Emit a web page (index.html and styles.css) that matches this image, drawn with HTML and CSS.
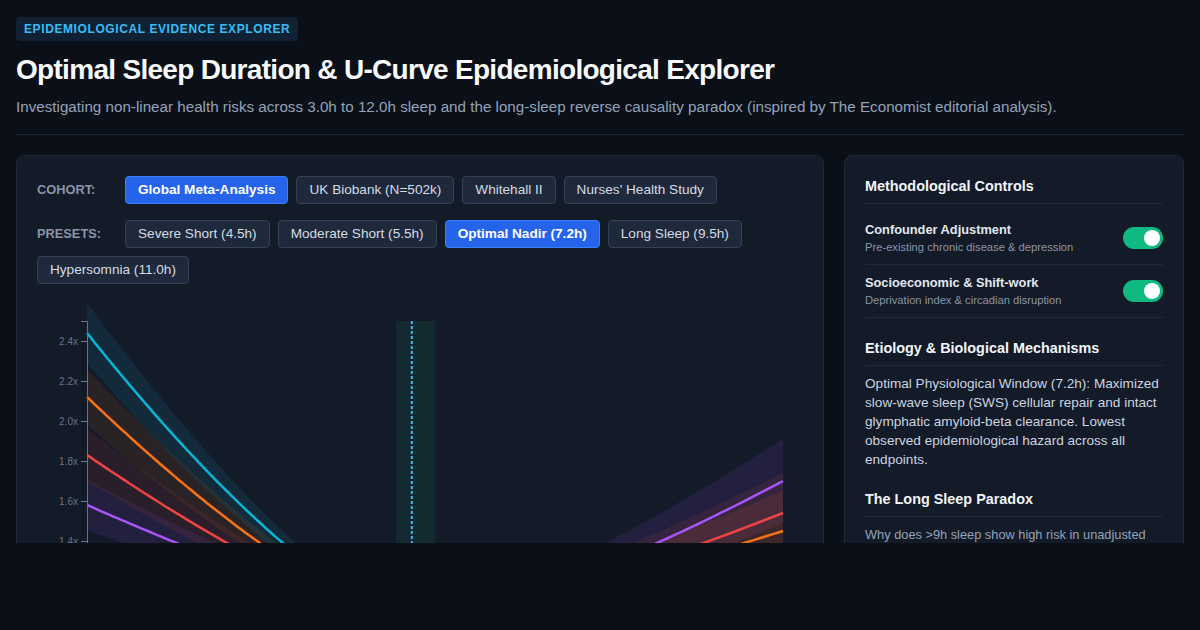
FILE: index.html
```html
<!DOCTYPE html>
<html lang="en">
<head>
<meta charset="utf-8">
<title>Optimal Sleep Duration &amp; U-Curve Epidemiological Explorer</title>
<link rel="stylesheet" href="styles.css">
</head>
<body>
<div class="page">
  <header class="header">
    <span class="badge">Epidemiological Evidence Explorer</span>
    <h1 class="title">Optimal Sleep Duration &amp; U-Curve Epidemiological Explorer</h1>
    <p class="subtitle">Investigating non-linear health risks across 3.0h to 12.0h sleep and the long-sleep reverse causality paradox (inspired by The Economist editorial analysis).</p>
  </header>

  <main class="layout">
    <section class="card chart-card">
      <div class="control-row cohort-row">
        <span class="control-label">COHORT:</span>
        <button class="btn active">Global Meta-Analysis</button>
        <button class="btn">UK Biobank (N=502k)</button>
        <button class="btn">Whitehall II</button>
        <button class="btn">Nurses' Health Study</button>
      </div>
      <div class="control-row">
        <span class="control-label">PRESETS:</span>
        <button class="btn">Severe Short (4.5h)</button>
        <button class="btn">Moderate Short (5.5h)</button>
        <button class="btn active">Optimal Nadir (7.2h)</button>
        <button class="btn">Long Sleep (9.5h)</button>
        <button class="btn">Hypersomnia (11.0h)</button>
      </div>
      <svg id="chart" class="chart" width="766" height="260" viewBox="0 0 766 260" xmlns="http://www.w3.org/2000/svg">
        <g id="zone"></g>
        <g id="bands"></g>
        <g id="lines"></g>
        <g id="axis" class="axis"></g>
      </svg>
    </section>

    <aside class="card side">
      <section class="side-section">
        <h3 class="side-title">Methodological Controls</h3>
        <div class="toggle-row">
          <div class="toggle-text">
            <div class="toggle-name">Confounder Adjustment</div>
            <div class="toggle-desc">Pre-existing chronic disease &amp; depression</div>
          </div>
          <span class="switch on"><span class="knob"></span></span>
        </div>
        <div class="toggle-row">
          <div class="toggle-text">
            <div class="toggle-name">Socioeconomic &amp; Shift-work</div>
            <div class="toggle-desc">Deprivation index &amp; circadian disruption</div>
          </div>
          <span class="switch on"><span class="knob"></span></span>
        </div>
      </section>

      <section class="side-section">
        <h3 class="side-title">Etiology &amp; Biological Mechanisms</h3>
        <p class="side-text">Optimal Physiological Window (7.2h): Maximized slow-wave sleep (SWS) cellular repair and intact glymphatic amyloid-beta clearance. Lowest observed epidemiological hazard across all endpoints.</p>
      </section>

      <section class="side-section">
        <h3 class="side-title">The Long Sleep Paradox</h3>
        <p class="side-note">Why does &gt;9h sleep show high risk in unadjusted</p>
      </section>
    </aside>
  </main>
</div>
<script src="script.js"></script>
</body>
</html>
```

FILE: styles.css
```css
* { box-sizing: border-box; }

html, body {
  margin: 0;
  padding: 0;
  background: #0b0f18;
}

body {
  font-family: "Liberation Sans", Arial, Helvetica, sans-serif;
  color: #e2e8f0;
}

.page {
  height: 543px;
  overflow: hidden;
  padding: 17px 16px 0;
}

.header {
  padding-bottom: 16px;
  border-bottom: 1px solid #1e293b;
}

.badge {
  display: inline-block;
  padding: 4px 8px;
  font-size: 12px;
  line-height: 16px;
  font-weight: 700;
  letter-spacing: 0.6px;
  text-transform: uppercase;
  color: #38bdf8;
  background: #0f2132;
  border-radius: 4px;
}

.title {
  margin: 12px 0 0;
  font-size: 28px;
  line-height: 1.2;
  font-weight: 700;
  letter-spacing: -0.7px;
  color: #f8fafc;
}

.subtitle {
  margin: 9px 0 0;
  font-size: 15.2px;
  line-height: 22px;
  color: #94a3b8;
}

.layout {
  display: grid;
  grid-template-columns: 1fr 340px;
  gap: 20px;
  margin-top: 20px;
  align-items: start;
}

.card {
  background: #131a28;
  border: 1px solid #1f2937;
  border-radius: 8px;
  padding: 20px;
}

.control-row {
  display: flex;
  flex-wrap: wrap;
  align-items: center;
  gap: 8px;
}

.cohort-row {
  margin-bottom: 16px;
}

.control-label {
  min-width: 80px;
  font-size: 12.8px;
  font-weight: 700;
  color: #8b95a7;
}

.btn {
  font-family: inherit;
  font-size: 13.6px;
  line-height: 16px;
  padding: 5px 12px;
  color: #d5dbe4;
  background: #1e293b;
  border: 1px solid #334155;
  border-radius: 4px;
  cursor: pointer;
}

.btn.active {
  background: #2563eb;
  border-color: #3b82f6;
  color: #ffffff;
  font-weight: 700;
}

.chart {
  display: block;
  margin-top: 16px;
  overflow: visible;
}

.axis text {
  font-family: "Liberation Sans", Arial, sans-serif;
  font-size: 10px;
  fill: #64748b;
}

.side {
  padding: 20px;
  min-height: 420px;
}

.side-section + .side-section {
  margin-top: 20px;
}

.side-title {
  margin: 0 0 8px;
  padding-bottom: 7px;
  border-bottom: 1px solid #1e293b;
  font-size: 14.4px;
  line-height: 20px;
  font-weight: 700;
  color: #f1f5f9;
}

.toggle-row {
  display: flex;
  justify-content: space-between;
  align-items: center;
  padding: 10px 0;
  border-bottom: 1px solid #1e293b;
}

.toggle-name {
  font-size: 12.8px;
  line-height: 16px;
  font-weight: 700;
  color: #e2e8f0;
}

.toggle-desc {
  margin-top: 2px;
  font-size: 11.2px;
  line-height: 14px;
  color: #8b95a7;
}

.switch {
  position: relative;
  flex: none;
  width: 40px;
  height: 22px;
  border-radius: 11px;
  background: #334155;
}

.switch.on {
  background: #10b981;
}

.knob {
  position: absolute;
  top: 3px;
  left: 3px;
  width: 16px;
  height: 16px;
  border-radius: 50%;
  background: #ffffff;
}

.switch.on .knob {
  left: 21px;
}

.side-text {
  margin: 0;
  font-size: 13.6px;
  line-height: 19px;
  color: #cbd5e1;
}

.side-note {
  margin: 0;
  font-size: 12.8px;
  line-height: 19px;
  color: #94a3b8;
}
```

FILE: script.js
```js
(function () {
  var NS = 'http://www.w3.org/2000/svg';
  var xs = function (h) { return 50 + (h - 3) * 696 / 9; };
  var ys = function (v) { return 21 + (2.5 - v) * 200; };

  function el(name, attrs, parent) {
    var e = document.createElementNS(NS, name);
    for (var k in attrs) e.setAttribute(k, attrs[k]);
    parent.appendChild(e);
    return e;
  }

  var series = [
    { c: '#a855f7', f: 'rgba(168,85,247,0.11)', aL: 0.58, pL: 1.23, bL: 0.030, aR: 0.70, pR: 1.41, bR: 0.044 },
    { c: '#ef4444', f: 'rgba(239,68,68,0.10)', aL: 0.83, pL: 1.34, bL: 0.031, aR: 0.54, pR: 1.35, bR: 0.042 },
    { c: '#f97316', f: 'rgba(249,115,22,0.10)', aL: 1.12, pL: 1.39, bL: 0.033, aR: 0.45, pR: 1.30, bR: 0.042 },
    { c: '#06b6d4', f: 'rgba(6,182,212,0.10)', aL: 1.44, pL: 1.415, bL: 0.036, aR: 0.28, pR: 1.40, bR: 0.020 }
  ];

  function val(s, h) {
    var d = h - 7.2;
    if (d < 0) return 1 + s.aL * Math.pow(-d / 4.2, s.pL);
    return 1 + s.aR * Math.pow(d / 4.8, s.pR);
  }
  function half(s, h) {
    var d = h - 7.2;
    return d < 0 ? s.bL * -d : s.bR * d;
  }

  var zone = document.getElementById('zone');
  var bands = document.getElementById('bands');
  var lines = document.getElementById('lines');
  var axis = document.getElementById('axis');

  el('rect', { x: xs(7.0), y: 21, width: xs(7.5) - xs(7.0), height: 240, fill: 'rgba(16,185,129,0.10)' }, zone);
  el('line', { x1: xs(7.2), x2: xs(7.2), y1: 21, y2: 261, stroke: '#38bdf8', 'stroke-width': 2, 'stroke-dasharray': '3 2' }, zone);

  var hs = [];
  for (var h = 3; h <= 12.0001; h += 0.05) hs.push(Math.round(h * 100) / 100);

  series.forEach(function (s) {
    var up = [], lo = [], ln = [];
    hs.forEach(function (h) {
      var v = val(s, h), w = half(s, h);
      up.push(xs(h).toFixed(1) + ',' + ys(v + w).toFixed(1));
      lo.unshift(xs(h).toFixed(1) + ',' + ys(v - w).toFixed(1));
      ln.push(xs(h).toFixed(1) + ',' + ys(v).toFixed(1));
    });
    el('polygon', { points: up.concat(lo).join(' '), fill: s.f }, bands);
    el('polyline', { points: ln.join(' '), fill: 'none', stroke: s.c, 'stroke-width': 2.5, 'stroke-linejoin': 'round' }, lines);
  });

  el('path', { d: 'M44,21.5H50.5V261.5H44', fill: 'none', stroke: '#64748b', 'stroke-width': 1 }, axis);
  [2.4, 2.2, 2.0, 1.8, 1.6, 1.4].forEach(function (v) {
    var y = ys(v) + 0.5;
    el('line', { x1: 44, x2: 50, y1: y, y2: y, stroke: '#64748b' }, axis);
    var t = el('text', { x: 41, y: y, 'text-anchor': 'end', dy: '0.32em' }, axis);
    t.textContent = v.toFixed(1) + 'x';
  });
})();
```
